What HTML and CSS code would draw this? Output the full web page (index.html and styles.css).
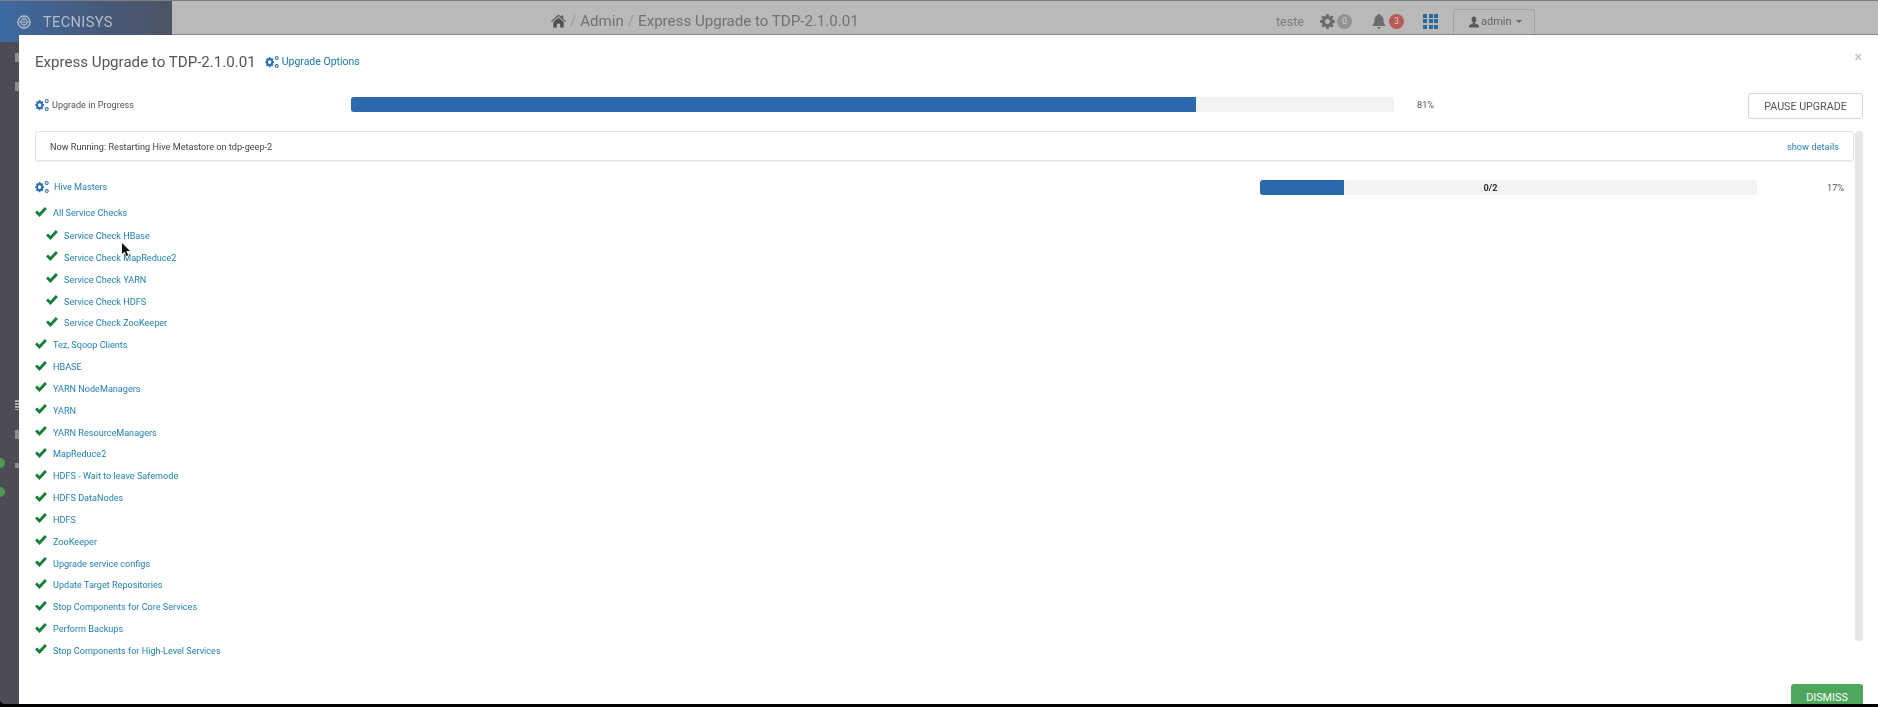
FILE: index.html
```html
<!DOCTYPE html>
<html lang="en">
<head>
<meta charset="utf-8">
<title>Express Upgrade to TDP-2.1.0.01</title>
<link rel="stylesheet" href="styles.css">
</head>
<body>
<svg class="defs" aria-hidden="true">
  <defs>
    <symbol id="cogs" viewBox="0 0 16 14">
      <path d="M5.200 2.700h2.100l.3 1.400 1 .4 1.200-.8 1.500 1.500-.8 1.200.4 1 1.400.3v2.100l-1.400.3-.4 1 .8 1.200-1.500 1.500-1.200-.8-1 .4-.3 1.400H5.200l-.3-1.400-1-.4-1.200.8-1.500-1.500.8-1.200-.4-1L.2 9.800V7.700l1.400-.3.4-1-.8-1.200 1.500-1.500 1.200.8 1-.4zM6.250 6.500a2.250 2.250 0 1 0 .001 0z" fill-rule="evenodd" transform="translate(0 -1.400) scale(.84 .98)"/>
      <path d="M13.500 0a2.300 2.300 0 1 1-.001 0zM13.500 1.300a1 1 0 1 0 .001 0z" fill-rule="evenodd"/>
      <path d="M13.500 9.400a2.300 2.300 0 1 1-.001 0zM13.500 10.700a1 1 0 1 0 .001 0z" fill-rule="evenodd"/>
    </symbol>
    <symbol id="check" viewBox="0 0 13 11">
      <path d="M0 6.100l2.100-2.200 2.700 2.500L10.700 0 13 2.200 4.800 11z"/>
    </symbol>
  </defs>
</svg>

<div class="screen">
  <div class="backdrop">
    <header class="topbar">
      <div class="brand">
        <svg class="brand-mark" viewBox="0 0 14 14"><circle cx="7" cy="7" r="6" fill="none" stroke="currentColor" stroke-width="1.300"/><circle cx="7" cy="7" r="3.200" fill="none" stroke="currentColor" stroke-width="1.100"/><path d="M7 0v14M0 7h14" stroke="currentColor" stroke-width=".8"/></svg>
        <span class="brand-name">TECNISYS</span>
      </div>
      <div class="crumbs">
        <svg class="home" viewBox="0 0 16 14"><path d="M8 0l3 2.700V1h2v3.500L16 7.200l-.8.800L8 1.700.8 8 0 7.200zM2.500 8L8 3.200 13.500 8v6H9.700V9.800H6.300V14H2.500z"/></svg>
        <span class="crumb-sep">/</span><span>Admin</span><span class="crumb-sep">/</span><span>Express Upgrade to TDP-2.1.0.01</span>
      </div>
      <div class="top-tools">
        <span class="cluster">teste</span>
        <svg class="top-gear" viewBox="0 0 14 14"><path fill-rule="evenodd" d="M5.900 0h2.200l.3 1.900 1.100.5 1.600-1.100 1.600 1.600-1.100 1.600.5 1.100 1.900.3v2.200l-1.900.3-.5 1.100 1.100 1.600-1.600 1.600-1.600-1.100-1.100.5-.3 1.900H5.900l-.3-1.900-1.100-.5-1.600 1.100-1.600-1.600 1.100-1.600-.5-1.100L0 8.100V5.900l1.900-.3.500-1.100-1.100-1.600 1.600-1.600 1.600 1.100 1.100-.5zM7 4.700a2.300 2.300 0 1 0 .001 0z"/></svg>
        <span class="badge badge-grey">0</span>
        <svg class="top-bell" viewBox="0 0 14 15"><path d="M7 0c.8 0 1.200.5 1.200 1.100C10.500 1.700 11.500 3.500 11.500 6c0 3 1 4.500 2.500 6H0c1.500-1.500 2.500-3 2.500-6 0-2.500 1-4.300 3.300-4.900C5.800.5 6.200 0 7 0zM5.500 13h3c0 1-.7 2-1.500 2s-1.500-1-1.500-2z"/></svg>
        <span class="badge badge-red">3</span>
        <span class="apps"><i></i><i></i><i></i><i></i><i></i><i></i><i></i><i></i><i></i></span>
        <div class="user-btn">
          <svg class="user-icon" viewBox="0 0 12 13"><path d="M6 0c1.900 0 2.900 1.300 2.900 3.300 0 1.500-.6 2.900-1.500 3.600v1.300c1.800.6 4.100 1.300 4.600 2.800v2H0v-2c.5-1.500 2.800-2.200 4.600-2.800V6.900C3.700 6.200 3.100 4.800 3.100 3.300 3.100 1.300 4.100 0 6 0z"/></svg>
          <span>admin</span><span class="caret"></span>
        </div>
      </div>
    </header>
    <aside class="sidebar">
      <span class="side-glyph"></span>
      <span class="side-glyph"></span>
      <div class="side-low">
        <span class="side-lines"></span>
        <span class="side-tri"></span>
        <div class="side-row"><span class="side-dot"></span><span class="side-tri side-tri-small"></span></div>
        <div class="side-row"><span class="side-dot"></span></div>
      </div>
    </aside>
  </div>

  <section class="modal">
    <div class="modal-head">
      <h1 class="modal-title">Express Upgrade to TDP-2.1.0.01</h1>
      <a class="options"><svg class="cogs cogs-sm"><use href="#cogs"/></svg>Upgrade Options</a>
      <span class="close">×</span>
    </div>

    <div class="overall">
      <div class="overall-label"><svg class="cogs"><use href="#cogs"/></svg>Upgrade in Progress</div>
      <div class="bar bar-main"><div class="bar-fill" style="width:81%"></div></div>
      <div class="pct pct-main">81%</div>
      <button class="pause">PAUSE UPGRADE</button>
    </div>

    <div class="modal-body">
      <div class="body-main">
        <div class="running">
          <span>Now Running: Restarting Hive Metastore on tdp-geep-2</span>
          <a class="link details">show details</a>
        </div>
        <div class="active-row">
          <a class="link active-name"><svg class="cogs"><use href="#cogs"/></svg><span>Hive Masters</span></a>
          <div class="bar bar-sub"><div class="bar-fill" style="width:17%"></div><span class="bar-text">0/2</span></div>
          <div class="pct pct-sub">17%</div>
        </div>
        <ul class="steps">
          <li class="step first"><svg class="check"><use href="#check"/></svg><a class="link">All Service Checks</a></li>
          <li class="step sub"><svg class="check"><use href="#check"/></svg><a class="link">Service Check HBase</a></li>
          <li class="step sub"><svg class="check"><use href="#check"/></svg><a class="link">Service Check MapReduce2</a></li>
          <li class="step sub"><svg class="check"><use href="#check"/></svg><a class="link">Service Check YARN</a></li>
          <li class="step sub"><svg class="check"><use href="#check"/></svg><a class="link">Service Check HDFS</a></li>
          <li class="step sub"><svg class="check"><use href="#check"/></svg><a class="link">Service Check ZooKeeper</a></li>
          <li class="step"><svg class="check"><use href="#check"/></svg><a class="link">Tez, Sqoop Clients</a></li>
          <li class="step"><svg class="check"><use href="#check"/></svg><a class="link">HBASE</a></li>
          <li class="step"><svg class="check"><use href="#check"/></svg><a class="link">YARN NodeManagers</a></li>
          <li class="step"><svg class="check"><use href="#check"/></svg><a class="link">YARN</a></li>
          <li class="step"><svg class="check"><use href="#check"/></svg><a class="link">YARN ResourceManagers</a></li>
          <li class="step"><svg class="check"><use href="#check"/></svg><a class="link">MapReduce2</a></li>
          <li class="step"><svg class="check"><use href="#check"/></svg><a class="link">HDFS - Wait to leave Safemode</a></li>
          <li class="step"><svg class="check"><use href="#check"/></svg><a class="link">HDFS DataNodes</a></li>
          <li class="step"><svg class="check"><use href="#check"/></svg><a class="link">HDFS</a></li>
          <li class="step"><svg class="check"><use href="#check"/></svg><a class="link">ZooKeeper</a></li>
          <li class="step"><svg class="check"><use href="#check"/></svg><a class="link">Upgrade service configs</a></li>
          <li class="step"><svg class="check"><use href="#check"/></svg><a class="link">Update Target Repositories</a></li>
          <li class="step"><svg class="check"><use href="#check"/></svg><a class="link">Stop Components for Core Services</a></li>
          <li class="step"><svg class="check"><use href="#check"/></svg><a class="link">Perform Backups</a></li>
          <li class="step"><svg class="check"><use href="#check"/></svg><a class="link">Stop Components for High-Level Services</a></li>
        </ul>
      </div>
      <div class="scrollbar"></div>
    </div>

    <div class="modal-foot"><button class="dismiss">DISMISS</button></div>
  </section>

  <svg class="pointer" viewBox="0 0 8 13"><path d="M0 0v11l2.600-2.300L4.400 13l1.800-.8-1.800-4.100H8z"/></svg>
</div>
</body>
</html>
```

FILE: styles.css
```css
* { box-sizing: border-box; }
html, body { margin: 0; height: 100%; background: #000; overflow: hidden; }
body { font-family: Roboto, "Liberation Sans", sans-serif; }
.defs { display: none; }
a { text-decoration: none; }

.screen { position: relative; width: 1878px; height: 704px; overflow: hidden; filter: blur(.35px); border-bottom-left-radius: 5px; }
.backdrop { display: flex; flex-direction: column; height: 100%; background: #55565c; }

.topbar { display: flex; align-items: stretch; height: 35px; background: #b9b9b9; border-top: 1px solid #7d7d85; border-bottom: 1px solid #8a8a8a; flex: none; }
.brand { width: 172px; display: flex; align-items: center; padding-left: 17px; gap: 12px; color: #b3bccb; background: linear-gradient(90deg, #3d6aa3 0%, #465a7c 55%, #4c5464 100%); margin-bottom: -8px; position: relative; }
.brand-mark { width: 14px; height: 14px; }
.brand-name { font-size: 14.700px; letter-spacing: .3px; }
.crumbs { position: absolute; left: 551px; top: 12px; display: flex; align-items: center; gap: 4px; font-size: 15.100px; line-height: 18px; color: #727272; }
.home { width: 15px; height: 14px; fill: #525252; }
.crumb-sep { color: #999; }
.top-tools { position: absolute; left: 1276px; top: 0; height: 34px; padding-top: 8px; display: flex; align-items: center; font-size: 12px; color: #7d7d7d; }
.cluster { width: 27px; font-size: 12.500px; }
.top-gear { width: 15px; height: 15px; fill: #6d6d6d; margin-left: 17px; }
.badge { width: 15px; height: 15px; border-radius: 50%; font-size: 9px; line-height: 15px; text-align: center; color: #cfcfcf; }
.badge-grey { background: #929292; margin-left: 2px; margin-right: 20px; }
.badge-red { background: #b85a58; color: #e6c7c6; margin-left: 3px; margin-right: 19px; }
.top-bell { width: 14px; height: 15px; fill: #6d6d6d; }
.apps { display: grid; grid-template-columns: repeat(3, 4px); grid-auto-rows: 4px; gap: 1.500px; width: 15px; }
.apps i { background: #2b6a97; display: block; }
.user-btn { margin-left: 15px; width: 82px; height: 25px; align-self: flex-end; border: 1px solid #a2a2a2; border-bottom: none; border-radius: 3px 3px 0 0; display: flex; align-items: center; padding: 0 0 1px 15px; gap: 2px; font-size: 11px; color: #666; }
.user-icon { width: 10px; height: 12px; fill: #5a5a5a; }
.caret { width: 0; height: 0; border: 3px solid transparent; border-top-color: #666; border-bottom: none; margin-left: 2px; }

.sidebar { width: 172px; flex: 1; background: #4b4c54; display: flex; flex-direction: column; align-items: flex-start; padding-top: 18px; }
.side-glyph { width: 4px; height: 9px; margin-left: 15px; background: #8c8d90; margin-bottom: 20px; }
.side-low { margin-top: 289px; display: flex; flex-direction: column; gap: 20px; }
.side-lines { display: block; width: 4px; height: 10px; margin-left: 15px; background: repeating-linear-gradient(#a8a8aa 0 2px, transparent 2px 3px); }
.side-tri { display: block; width: 4px; height: 9px; margin-left: 15px; background: #8c8d90; }
.side-row { display: flex; align-items: flex-end; height: 10px; margin-top: -1px; }
.side-tri-small { height: 5px; margin-left: 10px; }
.side-dot { width: 10px; height: 10px; margin-left: -5px; border-radius: 50%; background: #4f9a50; }

.modal { position: absolute; left: 19px; top: 35px; right: 0; bottom: 0; background: #fff; display: flex; flex-direction: column; color: #555; }
.modal-head { display: flex; align-items: center; height: 36px; padding: 17px 0 0 16px; flex: none; position: relative; }
.modal-title { margin: 0; font-size: 15.100px; font-weight: 400; color: #555; line-height: 20px; }
.options { display: flex; align-items: center; color: #1878b4; font-size: 10.500px; margin-left: 9px; }
.cogs { width: 14px; height: 12px; fill: #2f6fb4; flex: none; }
.cogs-sm { margin-right: 3px; }
.close { position: absolute; right: 16px; top: 13px; font-size: 14px; line-height: 18px; color: #c8c8c8; font-weight: 700; }

.overall { display: flex; align-items: center; height: 26px; margin-top: 22px; padding-left: 16px; flex: none; font-size: 9.100px; }
.overall-label { width: 316px; display: flex; align-items: center; gap: 3px; color: #555; margin-top: -3px; }
.bar { position: relative; height: 15px; background: #f3f3f3; border-radius: 3px; overflow: hidden; flex: none; }
.bar-fill { height: 100%; background: #2a69ae; }
.bar-main { width: 1043px; margin-top: -3px; }
.pct { font-size: 9.200px; color: #555; }
.pct-main { width: 354px; padding-left: 23px; margin-top: -3px; }
.pause { width: 115px; height: 26px; border: 1px solid #d4d4d4; border-radius: 3px; background: #fff; font: 400 10.700px Roboto, sans-serif; color: #555; padding: 0; }

.modal-body { flex: 1; display: flex; min-height: 0; margin-top: 12px; padding-left: 16px; padding-right: 15px; }
.body-main { flex: 1; display: flex; flex-direction: column; min-width: 0; height: 510px; }
.scrollbar { width: 8px; height: 510px; margin-left: 1px; background: #e6e6e6; border-radius: 4px; flex: none; }
.running { height: 30px; display: flex; align-items: center; justify-content: space-between; border: 1px solid #e3e3e3; border-radius: 3px; box-shadow: 0 1px 1px rgba(0,0,0,.06); padding: 1px 14px 0; font-size: 9.150px; color: #444; flex: none; }
.link { color: #2380b6; font-size: 9.100px; }
.details { font-size: 9.300px; }
.active-row { display: flex; align-items: center; height: 15px; margin-top: 19px; flex: none; }
.active-name { display: flex; align-items: center; gap: 5px; width: 1225px; margin-top: -1px; }
.bar-sub { width: 497px; }
.bar-text { position: absolute; left: 0; right: 36px; top: 0; line-height: 15px; text-align: center; font-size: 9.200px; font-weight: 700; color: #333; }
.pct-sub { padding-left: 70px; }
.steps { list-style: none; margin: 6.200px 0 0; padding: 0; }
.step { display: flex; align-items: center; height: 21.830px; gap: 6px; }
.step.first { height: 24px; }
.step.sub { padding-left: 11px; }
.check { width: 12px; height: 10px; fill: #137f37; margin-top: -3px; flex: none; }

.modal-foot { position: absolute; right: 15px; bottom: 0; }
.dismiss { display: block; width: 72px; height: 20px; border: 0; border-radius: 3px 3px 0 0; background: #4ea75c; color: #fff; font: 400 10.800px Roboto, sans-serif; padding: 6px 0 0; }

.pointer { position: absolute; left: 122px; top: 243px; width: 8px; height: 13px; fill: #111; }
```
